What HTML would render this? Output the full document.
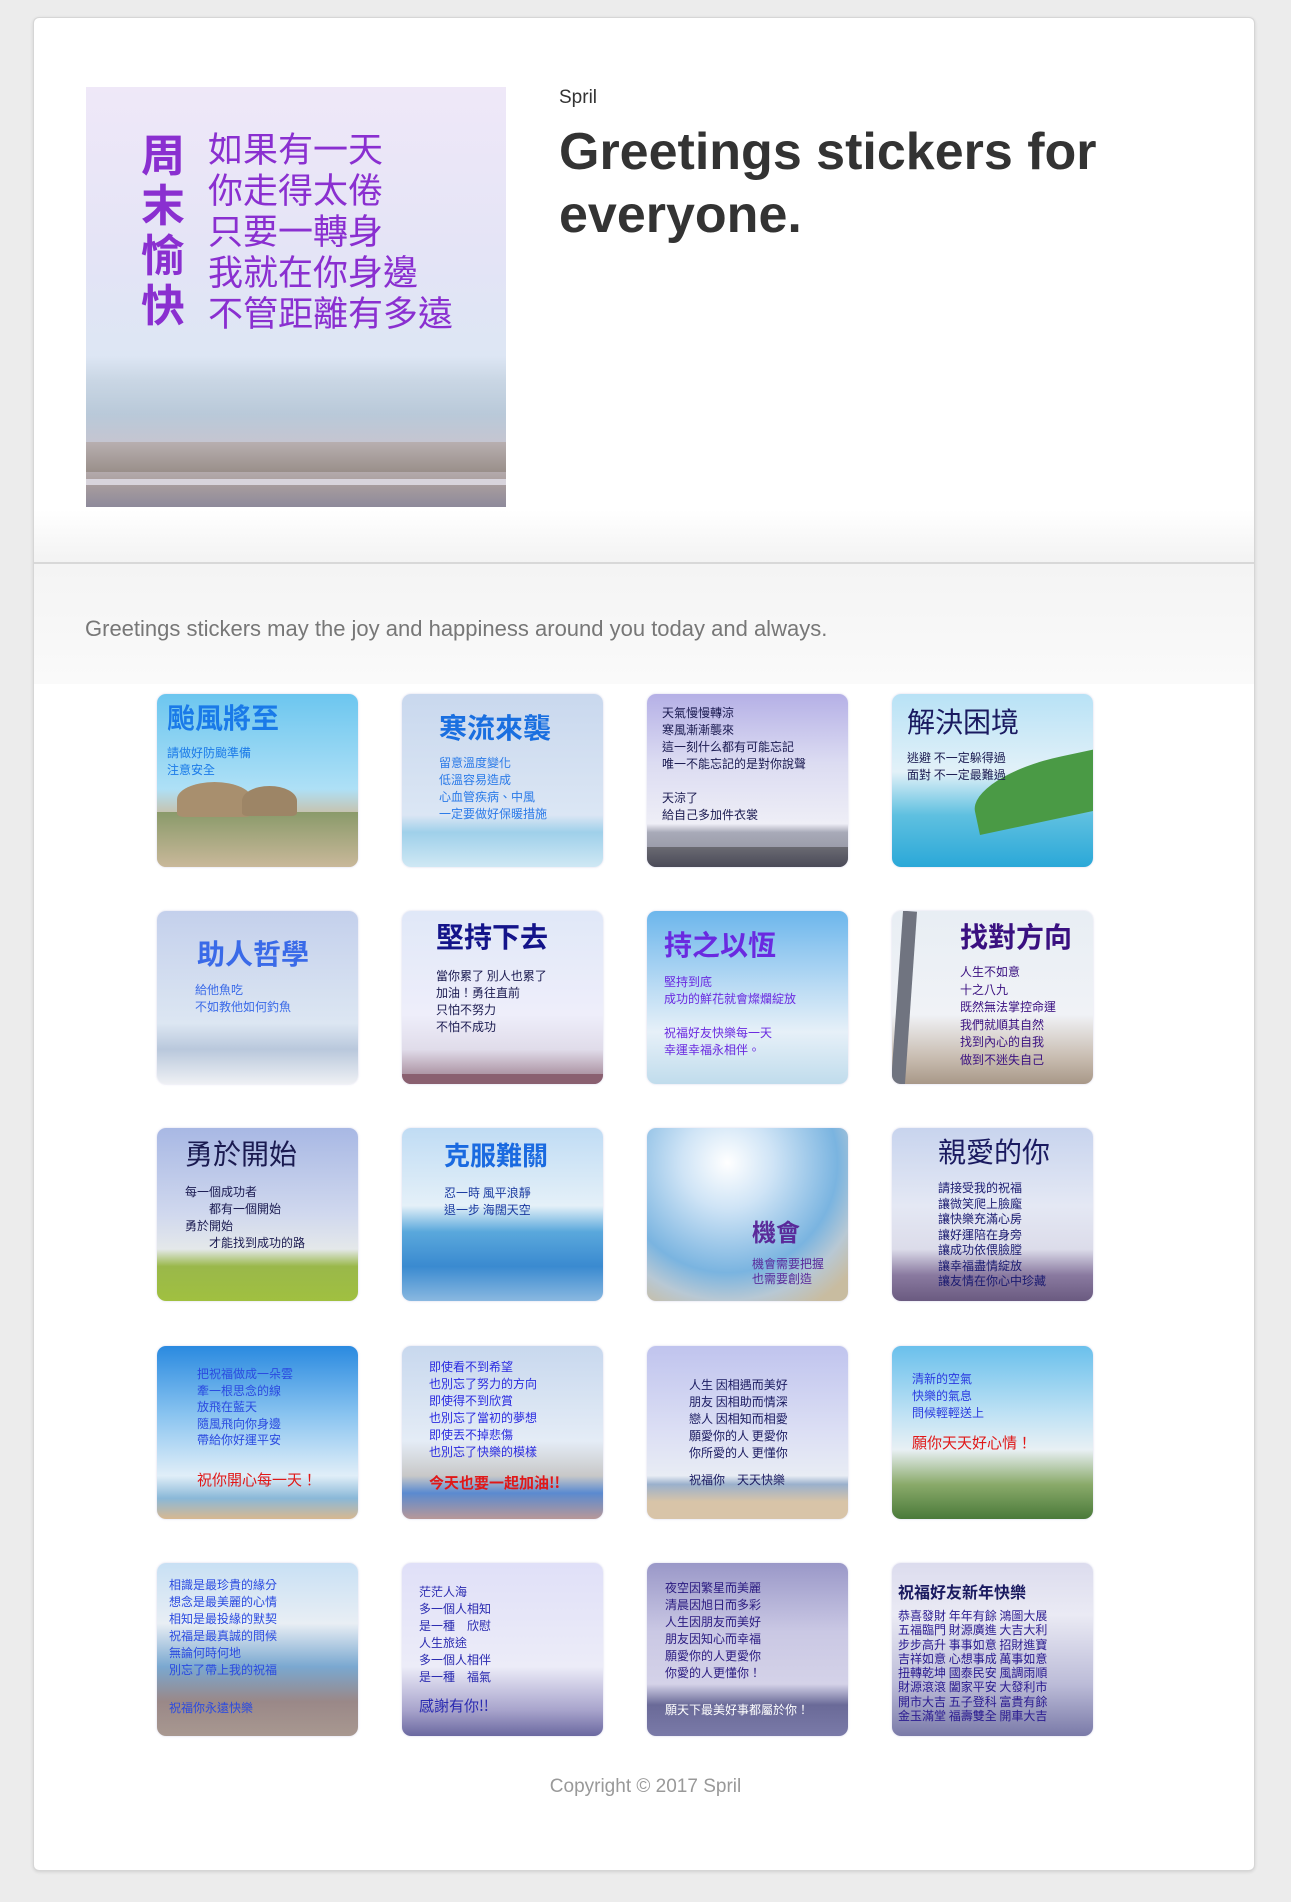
<!DOCTYPE html>
<html><head><meta charset="utf-8">
<style>
*{margin:0;padding:0;box-sizing:border-box}
html,body{width:1291px;height:1902px;background:#ececec;overflow:hidden}
body{font-family:"Liberation Sans","Noto Sans CJK TC",sans-serif;position:relative}
.card{position:absolute;left:33px;top:17px;width:1222px;height:1854px;background:#fff;border:1px solid #d6d6d6;border-radius:6px;box-shadow:0 1px 3px rgba(0,0,0,.12)}
.hdrfade{position:absolute;left:34px;top:510px;width:1220px;height:52px;background:linear-gradient(#fff,#f3f3f3)}
.divider{position:absolute;left:34px;top:562px;width:1220px;height:2px;background:#d8d8d8}
.secbg{position:absolute;left:34px;top:564px;width:1220px;height:120px;background:linear-gradient(#f4f4f4,#fafafa)}
.hero{position:absolute;left:86px;top:87px;width:420px;height:420px;overflow:hidden;background:linear-gradient(180deg,#efe8f8 0%,#e4e4f6 40%,#dde6f4 64%,#c9d6e4 70%,#b9c9d9 78%,#c7c4cf 86%,#ab9f9e 94%,#8e8a9b 100%)}
.hero .v{position:absolute;left:55px;top:40px;width:50px;font-size:44px;line-height:50px;color:#8a2fd0;font-weight:bold;font-family:"Noto Sans CJK TC",sans-serif}
.hero .t{position:absolute;left:122px;top:40px;font-size:35px;line-height:41px;color:#8a2fd0;font-family:"Noto Sans CJK TC",sans-serif;white-space:nowrap}
.author{position:absolute;left:559px;top:87px;font-size:19px;color:#333}
h1{position:absolute;left:559px;top:121px;font-size:52px;line-height:63px;font-weight:bold;color:#333;width:640px}
.lead{position:absolute;left:85px;top:616px;font-size:22px;color:#777;white-space:nowrap}
.copy{position:absolute;left:0;width:1291px;text-align:center;top:1776px;font-size:19px;color:#999}
.s{position:absolute;width:201px;height:173px;border-radius:9px;overflow:hidden;font-family:"Noto Sans CJK TC",sans-serif;box-shadow:0 0 2px rgba(150,150,200,.4)}
.s .g{position:absolute;left:0;right:0;bottom:0}
.s .tx{position:absolute;white-space:nowrap}
.ti{font-size:28px;font-weight:bold;line-height:34px}
.b{font-size:13px;line-height:17px}
</style></head><body>
<div class="card"></div>
<div class="hdrfade"></div>
<div class="divider"></div>
<div class="secbg"></div>

<div class="hero">
<div class="v">周末愉快</div>
<div class="t">如果有一天<br>你走得太倦<br>只要一轉身<br>我就在你身邊<br>不管距離有多遠</div>
<div style="position:absolute;left:0;right:0;top:355px;height:30px;background:linear-gradient(#b8afb0,#9a8f8a)"></div>
<div style="position:absolute;left:0;right:0;top:392px;height:6px;background:#d8d4dc"></div>
</div>
<div class="author">Spril</div>
<h1>Greetings stickers for everyone.</h1>
<div class="lead">Greetings stickers may the joy and happiness around you today and always.</div>

<!-- row 1 -->
<div class="s" style="left:157px;top:694px;background:linear-gradient(#6cc6ef,#aee0f6 55%,#c9c0a8 70%,#d9cdb5)">
<div class="g" style="height:55px;background:linear-gradient(#8a9a6a,#c9b89a)"></div>
<div style="position:absolute;left:20px;top:88px;width:75px;height:35px;border-radius:50% 50% 10% 10%;background:#a88f6e"></div>
<div style="position:absolute;left:85px;top:92px;width:55px;height:30px;border-radius:50% 50% 10% 10%;background:#9d8566"></div>
<div class="tx ti" style="left:10px;top:6px;color:#1a7ae8">颱風將至</div>
<div class="tx b" style="left:10px;top:50px;color:#1a7ae8;font-size:12px;line-height:17px">請做好防颱準備<br>注意安全</div></div>

<div class="s" style="left:402px;top:694px;background:linear-gradient(#c9d8ee,#dbe6f4 70%,#9fd0ea 80%,#cfe8f4)">
<div class="tx ti" style="left:37px;top:16px;color:#1a6fe0">寒流來襲</div>
<div class="tx b" style="left:37px;top:60px;color:#2a7ae8;font-size:12px">留意溫度變化<br>低溫容易造成<br>心血管疾病、中風<br>一定要做好保暖措施</div></div>

<div class="s" style="left:647px;top:694px;background:linear-gradient(#b5b0e6,#dcdcf2 40%,#eeeef6 75%,#a8aab8 80%,#8a8b98)">
<div class="g" style="height:20px;background:linear-gradient(#6a6a72,#4a4a58)"></div>
<div class="tx b" style="left:15px;top:10px;color:#1a1a50;font-size:12px;line-height:17px">天氣慢慢轉涼<br>寒風漸漸襲來<br>這一刻什么都有可能忘記<br>唯一不能忘記的是對你說聲<br><br>天涼了<br>給自己多加件衣裳</div></div>

<div class="s" style="left:892px;top:694px;background:linear-gradient(#b8e2f6,#e2f1f8 45%,#5fc0e0 70%,#2aa8d8)">
<div style="position:absolute;left:80px;top:65px;width:160px;height:60px;background:#4a9a45;border-radius:60% 10% 0 0;transform:rotate(-12deg)"></div>
<div class="tx ti" style="left:15px;top:10px;color:#1a1a60;font-weight:normal">解決困境</div>
<div class="tx b" style="left:15px;top:55px;color:#1a1a50;font-size:12px">逃避 不一定躲得過<br>面對 不一定最難過</div></div>

<!-- row 2 -->
<div class="s" style="left:157px;top:911px;background:linear-gradient(#c4d0ec,#dce6f2 65%,#b9c8dc 80%,#eef0f4)">
<div class="tx ti" style="left:40px;top:25px;color:#3a6ae8">助人哲學</div>
<div class="tx b" style="left:38px;top:70px;color:#3a6ae8;font-size:12px">給他魚吃<br>不如教他如何釣魚</div></div>

<div class="s" style="left:402px;top:911px;background:linear-gradient(#e0e8f8,#eeeefa 60%,#e0dcea 80%,#9a7a8a)">
<div class="g" style="height:10px;background:#8a6070"></div>
<div class="tx ti" style="left:34px;top:8px;color:#14148a">堅持下去</div>
<div class="tx b" style="left:34px;top:56px;color:#1a1a50;font-size:12px">當你累了 別人也累了<br>加油！勇往直前<br>只怕不努力<br>不怕不成功</div></div>

<div class="s" style="left:647px;top:911px;background:linear-gradient(#6cb6ec,#bcdcf4 45%,#e6f0f8 70%,#c0dcec)">
<div class="tx ti" style="left:17px;top:16px;color:#6a2ae0">持之以恆</div>
<div class="tx b" style="left:17px;top:62px;color:#6a2ae0;font-size:12px">堅持到底<br>成功的鮮花就會燦爛綻放<br><br>祝福好友快樂每一天<br>幸運幸福永相伴。</div></div>

<div class="s" style="left:892px;top:911px;background:linear-gradient(#e8eef4,#f0f2f6 60%,#c8bcb0 85%,#a89888)">
<div style="position:absolute;left:5px;top:0;width:14px;height:173px;background:#707480;transform:rotate(4deg)"></div>
<div class="tx ti" style="left:68px;top:8px;color:#3a1080">找對方向</div>
<div class="tx b" style="left:68px;top:52px;color:#3a1080;font-size:12px;line-height:17.5px">人生不如意<br>十之八九<br>既然無法掌控命運<br>我們就順其自然<br>找到內心的自我<br>做到不迷失自己</div></div>

<!-- row 3 -->
<div class="s" style="left:157px;top:1128px;background:linear-gradient(#a8b8e4,#d0d8ee 50%,#e4e8ea 70%,#9ab84a 80%,#a0c040)">
<div class="tx ti" style="left:28px;top:8px;color:#1a1a50;font-weight:normal">勇於開始</div>
<div class="tx b" style="left:28px;top:55px;color:#1a1a50;font-size:12px">每一個成功者<br>　　都有一個開始<br>勇於開始<br>　　才能找到成功的路</div></div>

<div class="s" style="left:402px;top:1128px;background:linear-gradient(#c0dcf4,#e4f0f8 45%,#5aa8dc 60%,#3a8ad0 80%,#8ab8e0)">
<div class="tx ti" style="left:42px;top:10px;color:#1a6ae0;font-size:26px">克服難關</div>
<div class="tx b" style="left:42px;top:56px;color:#1a3aa0;font-size:12px">忍一時 風平浪靜<br>退一步 海闊天空</div></div>

<div class="s" style="left:647px;top:1128px;background:radial-gradient(circle at 40% 20%,#fff 0,#cfe4f6 25%,#7ab4e0 60%,#b8c8d4 75%,#c8bca0 90%)">
<div class="tx" style="left:105px;top:85px;color:#5a2a9a;font-size:24px;font-weight:bold">機會</div>
<div class="tx b" style="left:105px;top:128px;color:#5a2a9a;font-size:12px;line-height:15px">機會需要把握<br>也需要創造</div></div>

<div class="s" style="left:892px;top:1128px;background:linear-gradient(#c8d4ee,#e4e8f4 45%,#dcdcea 70%,#8a7aa0 85%,#6a5a80)">
<div class="tx ti" style="left:46px;top:6px;color:#1a1a60;font-weight:normal">親愛的你</div>
<div class="tx b" style="left:46px;top:52px;color:#1a1a70;font-size:12px;line-height:15.5px">請接受我的祝福<br>讓微笑爬上臉龐<br>讓快樂充滿心房<br>讓好運陪在身旁<br>讓成功依偎臉膛<br>讓幸福盡情綻放<br>讓友情在你心中珍藏</div></div>

<!-- row 4 -->
<div class="s" style="left:157px;top:1346px;background:linear-gradient(#2a8ae0,#8ac4f0 40%,#e0eef8 75%,#8ab8d8 88%,#d8b890)">
<div class="tx b" style="left:40px;top:20px;color:#2a4ae0;font-size:12px;line-height:16.5px">把祝福做成一朵雲<br>牽一根思念的線<br>放飛在藍天<br>隨風飛向你身邊<br>帶給你好運平安</div>
<div class="tx" style="left:40px;top:123px;color:#e01818;font-size:15px">祝你開心每一天！</div></div>

<div class="s" style="left:402px;top:1346px;background:linear-gradient(#c8d8ee,#e4ecf6 55%,#c8c8c8 75%,#5a8ad0 85%,#b89898)">
<div class="tx b" style="left:27px;top:12px;color:#2a2ae0;font-size:12px;line-height:17px">即使看不到希望<br>也別忘了努力的方向<br>即使得不到欣賞<br>也別忘了當初的夢想<br>即使丟不掉悲傷<br>也別忘了快樂的模樣</div>
<div class="tx" style="left:27px;top:126px;color:#e01818;font-size:15px;font-weight:bold">今天也要一起加油!!</div></div>

<div class="s" style="left:647px;top:1346px;background:linear-gradient(#c0c4ee,#dcdff4 50%,#e8ecf4 75%,#9ab0cc 80%,#d8c4a8 90%)">
<div class="tx b" style="left:42px;top:30px;color:#1a1a60;font-size:12px;line-height:17px">人生 因相遇而美好<br>朋友 因相助而情深<br>戀人 因相知而相愛<br>願愛你的人 更愛你<br>你所愛的人 更懂你</div>
<div class="tx b" style="left:42px;top:125px;color:#1a1a60;font-size:12px">祝福你　天天快樂</div></div>

<div class="s" style="left:892px;top:1346px;background:linear-gradient(#6ac0ec,#c0e2f4 40%,#e8f0f4 60%,#8aaa6a 80%,#4a7a3a)">
<div class="tx b" style="left:20px;top:24px;color:#2a3ae0;font-size:12px;line-height:17px">清新的空氣<br>快樂的氣息<br>問候輕輕送上</div>
<div class="tx" style="left:20px;top:86px;color:#e01818;font-size:15px">願你天天好心情！</div></div>

<!-- row 5 -->
<div class="s" style="left:157px;top:1563px;background:linear-gradient(#c8e0f4,#e8eef4 35%,#7aa8d0 60%,#9a8888 80%,#a89890)">
<div class="tx b" style="left:12px;top:13px;color:#2a4ae0;font-size:12px;line-height:17px">相識是最珍貴的緣分<br>想念是最美麗的心情<br>相知是最投緣的默契<br>祝福是最真誠的問候<br>無論何時何地<br>別忘了帶上我的祝福</div>
<div class="tx b" style="left:12px;top:136px;color:#2a4ae0;font-size:12px">祝福你永遠快樂</div></div>

<div class="s" style="left:402px;top:1563px;background:linear-gradient(#e0e0f8,#ececf8 60%,#a8a4cc 85%,#6a68a0)">
<div class="tx b" style="left:17px;top:20px;color:#2a2ab0;font-size:12px;line-height:17px">茫茫人海<br>多一個人相知<br>是一種　欣慰<br>人生旅途<br>多一個人相伴<br>是一種　福氣</div>
<div class="tx" style="left:17px;top:132px;color:#2a2ab0;font-size:15px">感謝有你!!</div></div>

<div class="s" style="left:647px;top:1563px;background:linear-gradient(#9a98c8,#cac8e4 40%,#d4d2e8 70%,#6a6a98 82%,#7a7aa8)">
<div class="tx b" style="left:18px;top:16px;color:#2a1a80;font-size:12px;line-height:17px">夜空因繁星而美麗<br>清晨因旭日而多彩<br>人生因朋友而美好<br>朋友因知心而幸福<br>願愛你的人更愛你<br>你愛的人更懂你！</div>
<div class="tx b" style="left:18px;top:138px;color:#fff;font-size:12px">願天下最美好事都屬於你！</div></div>

<div class="s" style="left:892px;top:1563px;background:linear-gradient(#dcdcee,#eaeaf4 30%,#bcbcd8 70%,#7a7aa8)">
<div class="tx" style="left:6px;top:16px;color:#1a1a60;font-size:16px;font-weight:bold">祝福好友新年快樂</div>
<div class="tx b" style="left:6px;top:46px;color:#2a1a90;font-size:12px;line-height:14.3px">恭喜發財 年年有餘 鴻圖大展<br>五福臨門 財源廣進 大吉大利<br>步步高升 事事如意 招財進寶<br>吉祥如意 心想事成 萬事如意<br>扭轉乾坤 國泰民安 風調雨順<br>財源滾滾 闔家平安 大發利市<br>開市大吉 五子登科 富貴有餘<br>金玉滿堂 福壽雙全 開車大吉</div></div>

<div class="copy">Copyright © 2017 Spril</div>
</body></html>
